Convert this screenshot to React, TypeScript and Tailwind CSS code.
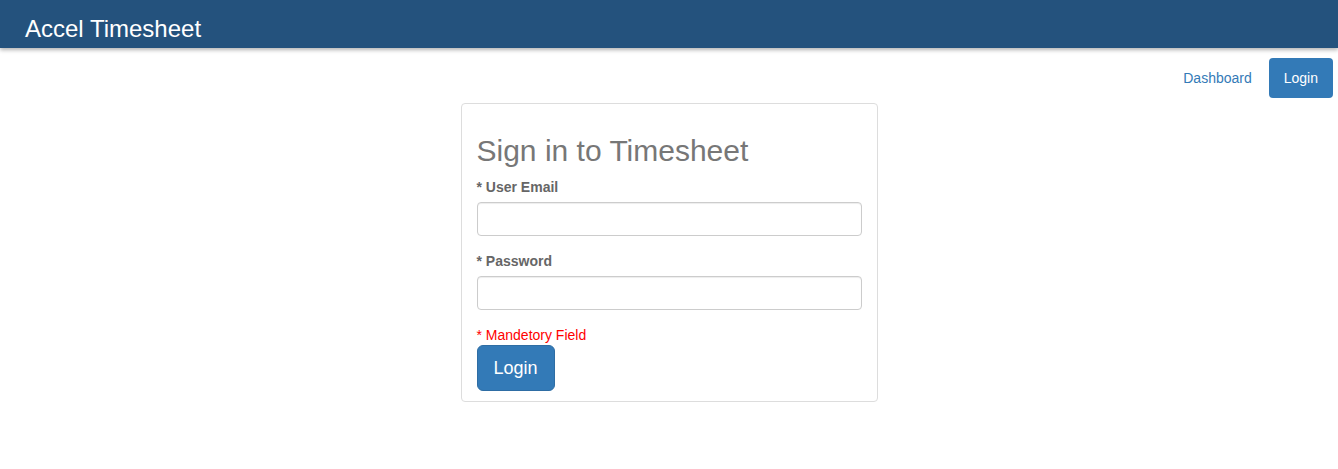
export default function App() {
  return (
    <div className="min-h-screen bg-white font-['Liberation_Sans',Arial,sans-serif] text-[14px] text-[#333]">
      <header className="h-12 bg-[#24527d] px-[25px] shadow-[0_2px_4px_rgba(0,0,0,0.3)]">
        <h1 className="pt-[15px] text-[24px] leading-[28px] text-white">Accel Timesheet</h1>
      </header>

      <nav className="mt-[10px] flex justify-end gap-[2px] pr-[5px]">
        <a href="#" className="rounded px-[15px] py-[10px] leading-5 text-[#337ab7]">
          Dashboard
        </a>
        <a href="#" className="rounded bg-[#337ab7] px-[15px] py-[10px] leading-5 text-white">
          Login
        </a>
      </nav>

      <div className="mx-auto mt-[5px] w-[417px] rounded border border-[#ddd] px-[15px] pb-[10px] pt-[10px]">
        <h2 className="mb-[10px] mt-5 text-[30px] leading-[33px] text-[#777]">Sign in to Timesheet</h2>
        <form onSubmit={(e) => e.preventDefault()}>
          <div className="mb-[15px]">
            <label className="mb-[5px] block font-bold leading-5 text-[#666]">* User Email</label>
            <input
              type="email"
              className="block h-[34px] w-full rounded border border-[#ccc] px-3 shadow-[inset_0_1px_1px_rgba(0,0,0,0.075)]"
            />
          </div>
          <div className="mb-[15px]">
            <label className="mb-[5px] block font-bold leading-5 text-[#666]">* Password</label>
            <input
              type="password"
              className="block h-[34px] w-full rounded border border-[#ccc] px-3 shadow-[inset_0_1px_1px_rgba(0,0,0,0.075)]"
            />
          </div>
          <p className="leading-5 text-[#ff0000]">* Mandetory Field</p>
          <button
            type="submit"
            className="rounded-md border border-[#2e6da4] bg-[#337ab7] px-4 py-[10px] text-[18px] leading-6 text-white"
          >
            Login
          </button>
        </form>
      </div>
    </div>
  );
}
